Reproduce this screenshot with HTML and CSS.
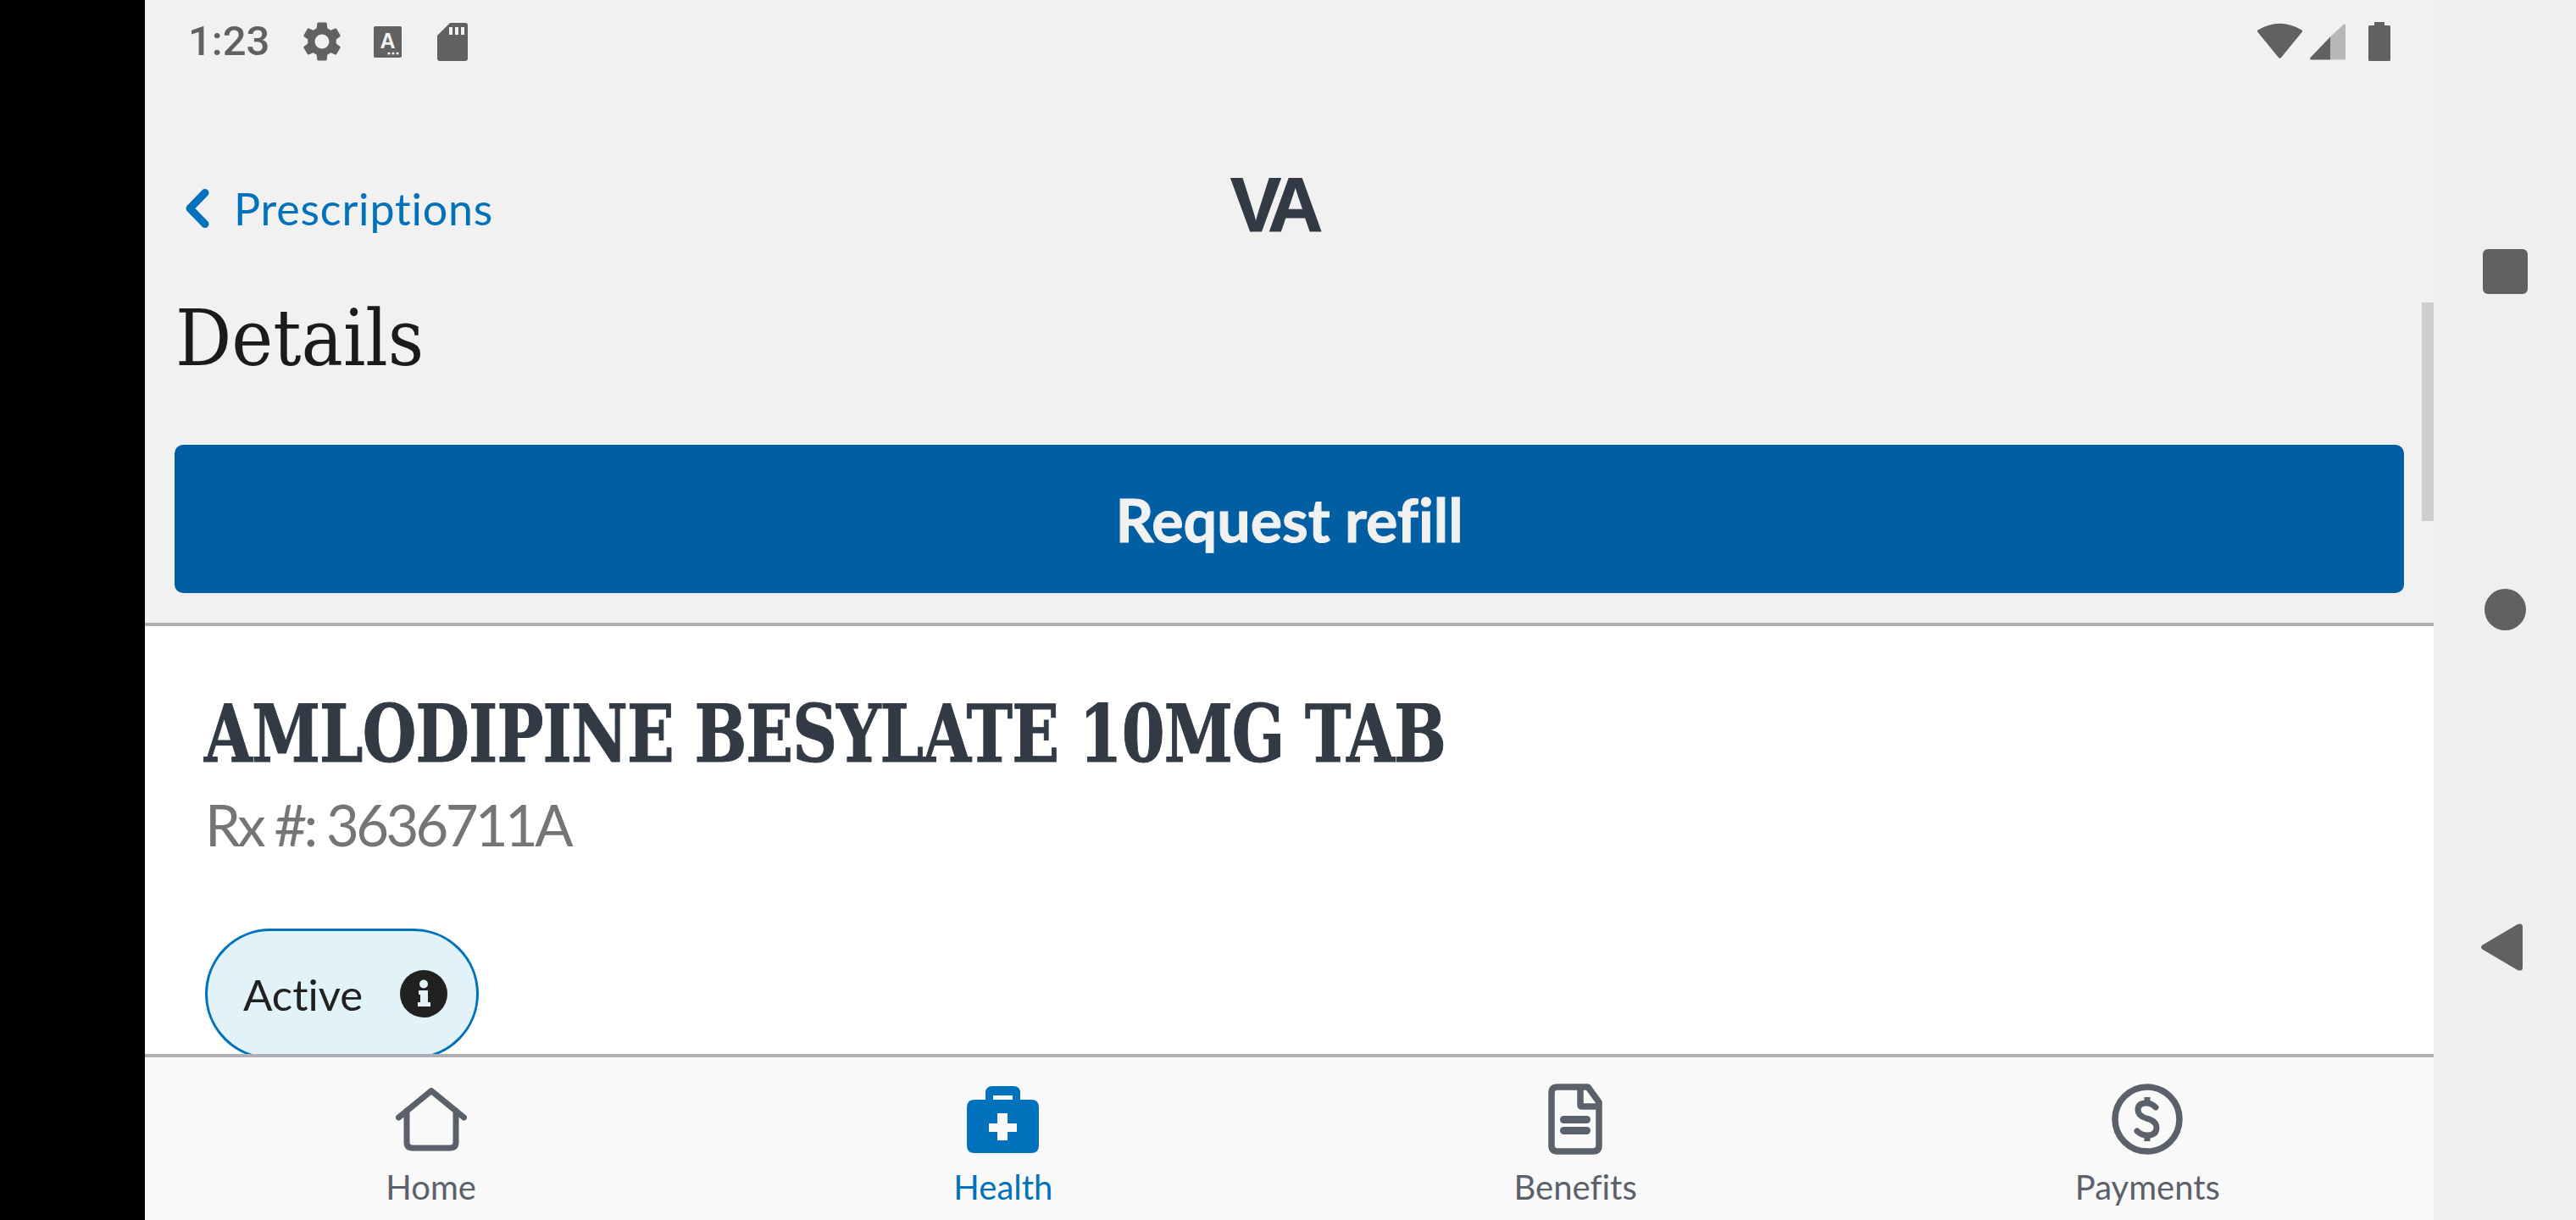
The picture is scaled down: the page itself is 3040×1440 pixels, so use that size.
FILE: index.html
```html
<!DOCTYPE html>
<html>
<head>
  <title>Prescription details</title>
  <link rel="stylesheet" href="styles.css">
</head>
<body>
  <div class="screen">
    <div class="cutout"></div>

    <div class="app">
      <div class="main">
        <!-- android status bar -->
        <div class="status">
          <span class="time">1:23</span>
          <svg class="ic-gear" viewBox="0 0 24 24"><path fill="#616161" d="M19.14,12.94c.04-.3.06-.61.06-.94 0-.32-.02-.64-.07-.94l2.03-1.58c.18-.14.23-.41.12-.61l-1.92-3.32c-.12-.22-.37-.29-.59-.22l-2.39.96c-.5-.38-1.03-.7-1.62-.94L14.4,2.81c-.04-.24-.24-.41-.48-.41h-3.84c-.24 0-.43.17-.47.41L9.25,5.35C8.66,5.59 8.12,5.92 7.63,6.29L5.24,5.33c-.22-.08-.47 0-.59.22L2.74,8.87C2.62,9.08 2.66,9.34 2.86,9.48l2.03,1.58C4.84,11.36 4.8,11.69 4.8,12s.02.64.07.94l-2.03,1.58c-.18.14-.23.41-.12.61l1.92,3.32c.12.22.37.29.59.22l2.39-.96c.5.38 1.03.7 1.62.94l.36,2.54c.05.24.24.41.48.41h3.84c.24 0 .44-.17.47-.41l.36-2.54c.59-.24 1.13-.56 1.62-.94l2.39.96c.22.08.47 0 .59-.22l1.92-3.32c.12-.22.07-.47-.12-.61l-2.01-1.58zM12,15.6c-1.98 0-3.6-1.62-3.6-3.6s1.62-3.6 3.6-3.6 3.6 1.62 3.6 3.6-1.62 3.6-3.6 3.6z"/></svg>
          <svg class="ic-a" viewBox="0 0 33 37">
            <rect width="33" height="37" rx="2" fill="#616161"/>
            <text x="16.500" y="25.500" text-anchor="middle" class="ic-a-letter">A</text>
            <circle cx="18" cy="32" r="1.6" fill="#f1f1f1"/>
            <circle cx="23" cy="32" r="1.6" fill="#f1f1f1"/>
            <circle cx="28" cy="32" r="1.6" fill="#f1f1f1"/>
          </svg>
          <svg class="ic-sd" viewBox="0 0 36 45">
            <path fill="#616161" d="M15 0H33Q36 0 36 3V42Q36 45 33 45H3Q0 45 0 42V15Z"/>
            <rect x="14" y="5" width="4" height="9" fill="#f1f1f1"/>
            <rect x="21" y="5" width="4" height="9" fill="#f1f1f1"/>
            <rect x="28" y="5" width="4" height="9" fill="#f1f1f1"/>
          </svg>
          <span class="status-gap"></span>
          <svg class="ic-wifi" viewBox="0 0 53 43"><path fill="#616161" d="M0.5 9.5Q26.5 -6 52.5 9.5Q53.5 10.5 52.5 12L28 42Q26.5 43.5 25 42L0.5 12Q-0.5 10.5 0.5 9.5Z"/></svg>
          <svg class="ic-signal" viewBox="0 0 42 43">
            <path fill="#b7b7b7" d="M24 15.500L40 0.500Q42 -0.500 42 2V41Q42 42.500 40 42.500H24Z"/>
            <path fill="#616161" d="M24 15.500V42.500H2Q-0.500 42.500 0.500 40Z"/>
          </svg>
          <svg class="ic-battery" viewBox="0 0 26 46"><path fill="#616161" d="M7 0H19V4H24.500Q26 4 26 5.500V44.500Q26 46 24.500 46H1.500Q0 46 0 44.500V5.500Q0 4 1.500 4H7Z"/></svg>
        </div>

        <div class="topbar">
          <a class="back">
            <svg class="ic-back" viewBox="0 0 29 46"><path d="M24 4.500L6 23L24 41.500" fill="none" stroke="#0071bb" stroke-width="9" stroke-linecap="round" stroke-linejoin="round"/></svg>
            Prescriptions
          </a>
          <span class="va-logo">VA</span>
        </div>

        <h1 class="page-title">Details</h1>
        <div class="btn-wrap">
          <button class="btn-refill">Request refill</button>
        </div>

        <div class="card">
          <h2 class="drug">AMLODIPINE BESYLATE 10MG TAB</h2>
          <p class="rx">Rx #: 3636711A</p>
          <div class="pill">
            <span>Active</span>
            <svg class="ic-info" viewBox="0 0 56 56">
              <circle cx="28" cy="28" r="28" fill="#212121"/>
              <circle cx="28" cy="16.500" r="5" fill="#e1f3f8"/>
              <path fill="#e1f3f8" d="M22 24H33V38H36V43H21V38H24V29H22Z"/>
            </svg>
          </div>
        </div>

        <div class="scrollbar"></div>
      </div>

      <div class="tabs">
        <div class="tab">
          <span class="tab-icon">
            <svg class="ic-home" viewBox="0 0 84 75"><path d="M3.500 35L42 3.500L80.500 35M13 27V64Q13 71 20 71H64Q71 71 71 64V27" fill="none" stroke="#5b616b" stroke-width="7" stroke-linecap="round" stroke-linejoin="round"/></svg>
          </span>
          <span class="tab-label">Home</span>
        </div>
        <div class="tab active">
          <span class="tab-icon">
            <svg class="ic-health" viewBox="0 0 85 79">
              <path fill="#0071bb" fill-rule="evenodd" d="M22 16V8Q22 0 30 0H55Q63 0 63 8V16H76Q85 16 85 25V70Q85 79 76 79H9Q0 79 0 70V25Q0 16 9 16ZM31 11V16H54V11ZM36 32V44H26V54H36V64H48V54H59V44H48V32Z"/>
            </svg>
          </span>
          <span class="tab-label">Health</span>
        </div>
        <div class="tab">
          <span class="tab-icon">
            <svg class="ic-doc" viewBox="0 0 64 84">
              <path d="M41 4H11Q4 4 4 11V73Q4 80 11 80H53Q60 80 60 73V22L47 4ZM38 4V25Q38 27 40 27H60" fill="none" stroke="#5b616b" stroke-width="7.500" stroke-linejoin="round"/>
              <rect x="14" y="38" width="36" height="9" rx="4.500" fill="#5b616b"/>
              <rect x="14" y="51" width="36" height="9" rx="4.500" fill="#5b616b"/>
            </svg>
          </span>
          <span class="tab-label">Benefits</span>
        </div>
        <div class="tab">
          <span class="tab-icon">
            <svg class="ic-pay" viewBox="0 0 84 84">
              <circle cx="42" cy="42" r="38" fill="none" stroke="#5b616b" stroke-width="7.500"/>
              <path d="M52 28Q47 23 41 23Q31 23 31 31Q31 38 41 41Q53 44 53 52Q53 61 42 61Q35 61 30 56" fill="none" stroke="#5b616b" stroke-width="7" stroke-linecap="round"/>
              <path d="M42 16V22M42 61V68" fill="none" stroke="#5b616b" stroke-width="7"/>
            </svg>
          </span>
          <span class="tab-label">Payments</span>
        </div>
      </div>
    </div>

    <div class="sysnav">
      <div class="nav-square"></div>
      <div class="nav-circle"></div>
      <svg class="nav-back" viewBox="0 0 49 56"><path fill="#616161" d="M1.500 25.500L43 1Q49 -1 49 4V52Q49 57 43 55L1.500 30.500Q-1.500 28 1.500 25.500Z"/></svg>
    </div>
  </div>
</body>
</html>
```

FILE: styles.css
```css
* { box-sizing: border-box; }
body {
  margin: 0;
  font-family: "Lato", "Noto Sans", sans-serif;
  font-variant-ligatures: none;
}
h1, h2, p { margin: 0; font-weight: normal; }

.screen {
  display: flex;
  width: 3040px;
  height: 1440px;
  overflow: hidden;
}
.cutout { width: 171px; background-color: #000; }
.app {
  width: 2701px;
  display: flex;
  flex-direction: column;
}
.main {
  position: relative;
  display: flex;
  flex-direction: column;
  height: 1244px;
  overflow: hidden;
  background-color: #f1f1f1;
}

/* status bar */
.status {
  display: flex;
  flex: none;
  align-items: flex-start;
  height: 100px;
  padding: 0 51px 0 51px;
}
.status svg { display: block; flex: none; }
.time {
  width: 135px;
  margin-top: 20px;
  font: 500 49px/1.2 "Roboto", sans-serif;
  color: #616161;
}
.ic-gear { width: 56px; height: 56px; margin: 21px 33px 0 -5px; }
.ic-a { width: 33px; height: 37px; margin: 31px 42px 0 0; }
.ic-a-letter { font: bold 25px "Liberation Sans", sans-serif; fill: #f1f1f1; }
.ic-sd { width: 36px; height: 45px; margin-top: 27px; }
.status-gap { flex: 1; }
.ic-wifi { width: 53px; height: 43px; margin: 26px 9px 0 0; }
.ic-signal { width: 42px; height: 43px; margin: 28px 27px 0 0; }
.ic-battery { width: 26px; height: 46px; margin-top: 26px; }

/* header */
.topbar {
  display: flex;
  flex: none;
  align-items: center;
  height: 145px;
  margin-top: 73px;
  padding-left: 47px;
}
.back {
  display: flex;
  align-items: center;
  width: 1234px;
  font-size: 52px;
  letter-spacing: 0.8px;
  color: #0071bb;
}
.ic-back { width: 29px; height: 46px; margin-right: 29px; }
.va-logo {
  margin-top: -6px;
  font: bold 90px "Liberation Sans", sans-serif;
  letter-spacing: -9px;
  -webkit-text-stroke: 1px #323a45;
  color: #323a45;
}
.page-title {
  flex: none;
  height: 207px;
  padding: 36px 0 0 36px;
  font: 92px/1 "DejaVu Serif Condensed", "DejaVu Serif", serif;
  color: #1b1b1b;
}

.btn-wrap {
  flex: none;
  padding: 0 35px;
}
.btn-refill {
  display: block;
  width: 100%;
  height: 175px;
  border: 0;
  border-radius: 10px;
  background-color: #005ea2;
  font: bold 70px "Lato", sans-serif;
  font-variant-ligatures: none;
  -webkit-text-stroke: 1px #f1f1f1;
  color: #f1f1f1;
}

/* drug card */
.card {
  flex: 1;
  margin-top: 35px;
  padding: 76px 71px 0;
  border-top: 4px solid #aeb0b5;
  background-color: #fff;
}
.drug {
  margin-left: -1px;
  font: bold 94px/1.1 "DejaVu Serif Condensed", "DejaVu Serif", serif;
  letter-spacing: -1px;
  -webkit-text-stroke: 1px #323a45;
  color: #323a45;
  white-space: nowrap;
  transform: scaleX(0.865);
  transform-origin: left center;
}
.rx {
  margin-top: 15px;
  font-size: 67px;
  line-height: 80px;
  letter-spacing: -3.7px;
  color: #757575;
}
.pill {
  display: flex;
  align-items: center;
  gap: 44px;
  width: 323px;
  height: 154px;
  margin-top: 83px;
  padding: 0 35px 0 42px;
  border: 3px solid #0071bb;
  border-radius: 77px;
  background-color: #e1f3f8;
  font-size: 51px;
  color: #212121;
}
.ic-info { flex: none; width: 56px; height: 56px; }

.scrollbar {
  position: absolute;
  top: 357px;
  right: 0;
  width: 14px;
  height: 258px;
  background-color: #cfcfcf;
}

/* bottom tabs */
.tabs {
  display: flex;
  flex: 1;
  border-top: 4px solid #aeb0b5;
  background-color: #f9f9f9;
}
.tab {
  flex: 1;
  display: flex;
  flex-direction: column;
  align-items: center;
  padding-top: 31px;
  color: #5b616b;
}
.tab.active { color: #0071bb; }
.tab-icon {
  display: flex;
  align-items: center;
  justify-content: center;
  height: 84px;
}
.tab-label { margin-top: 14px; font-size: 40px; line-height: 48px; }
.ic-home { width: 84px; height: 75px; }
.ic-health { width: 85px; height: 79px; }
.ic-doc { width: 64px; height: 84px; }
.ic-pay { width: 84px; height: 84px; }

/* android nav */
.sysnav {
  flex: 1;
  display: flex;
  flex-direction: column;
  align-items: center;
  padding-top: 294px;
  background-color: #efefef;
}
.nav-square {
  width: 53px;
  height: 53px;
  border-radius: 6px;
  background-color: #616161;
}
.nav-circle {
  width: 49px;
  height: 49px;
  margin-top: 348px;
  border-radius: 50%;
  background-color: #616161;
}
.nav-back { width: 49px; height: 56px; margin: 346px 7px 0 0; }
```
